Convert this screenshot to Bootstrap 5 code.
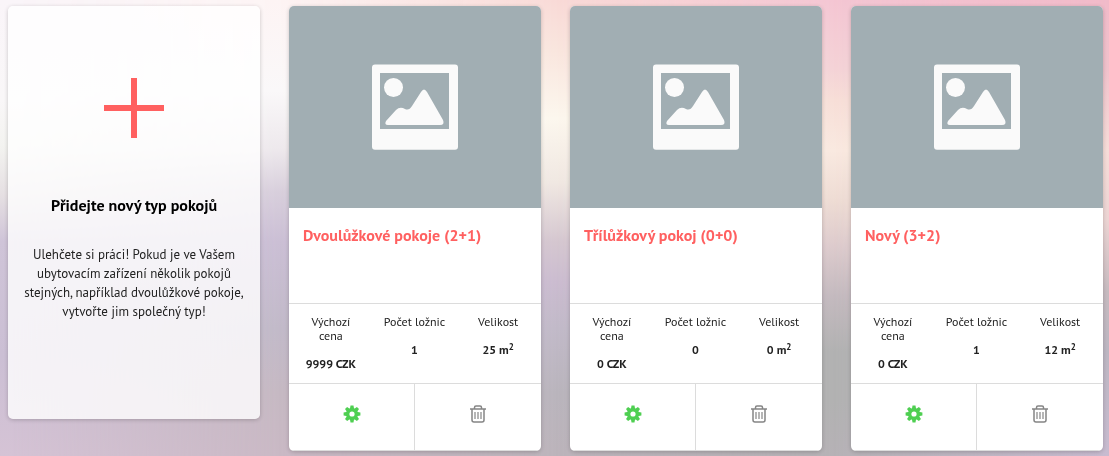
<!DOCTYPE html>
<html lang="cs">
<head>
<meta charset="utf-8">
<meta name="viewport" content="width=device-width, initial-scale=1">
<title>Typy pokojů</title>
<link href="https://cdn.jsdelivr.net/npm/bootstrap@5.3.0/dist/css/bootstrap.min.css" rel="stylesheet">
<style>
  body { font-family: "PT Sans", Lato, sans-serif; font-size: 13px; line-height: 19px; color: #222; background: #cfc4d6; }

  /* soft colour wash: each layer fades in from left to right */
  .wash, .wash div { position: fixed; inset: 0; }
  .wash { z-index: -1; }
  .wash-a { background: linear-gradient(#faf5f9 0%, #f9f7f8 22%, #f3f3f0 32%, #e5dfe2 43%, #cfc4d8 53%, #cbbfd4 78%, #d5c3d5 100%); }
  .wash-b { background: linear-gradient(#fdf4f4 0%, #faf8f9 20%, #ede8ec 33%, #d8cfdc 42%, #cbbfd5 53%, #c2bac9 72%, #c6b9c3 86%, #cab9c5 100%); mask-image: linear-gradient(90deg, transparent 1%, #000 25%); -webkit-mask-image: linear-gradient(90deg, transparent 1%, #000 25%); }
  .wash-c { background: linear-gradient(#f9dad7 0%, #f9e6de 11%, #fcf7ee 26%, #f0e8e2 40%, #d5c7d0 53%, #cbbcd0 62%, #c2bac9 72%, #bab5bd 86%, #bcb4bb 100%); mask-image: linear-gradient(90deg, transparent 25%, #000 50%); -webkit-mask-image: linear-gradient(90deg, transparent 25%, #000 50%); }
  .wash-d { background: linear-gradient(#f4c6d3 0%, #f4d3d7 15%, #f7dfd8 22%, #f9e9e0 33%, #eedcd4 44%, #ddcbcd 54%, #c4babf 65%, #b2b2b2 77%, #b2b2b2 88%, #b6b2b6 100%); mask-image: linear-gradient(90deg, transparent 50%, #000 75%); -webkit-mask-image: linear-gradient(90deg, transparent 50%, #000 75%); }
  .wash-e { background: linear-gradient(#f1bac9 0%, #f1c1cb 15%, #f6dcd8 33%, #ecd4d3 48%, #c6babf 64%, #bcb6c2 77%, #c8bbd0 100%); mask-image: linear-gradient(90deg, transparent 75%, #000 100%); -webkit-mask-image: linear-gradient(90deg, transparent 75%, #000 100%); }

  .room-grid { grid-template-columns: repeat(4, minmax(0, 1fr)); gap: 29px; padding: 6px 6px 5px 8px; }
  @media (max-width: 991px) { .room-grid { grid-template-columns: repeat(auto-fill, minmax(240px, 1fr)); } }

  .room-box { --line: #dcdcdc; border-radius: 5px; overflow: hidden; background: #fff; box-shadow: 0 1px 4px rgba(0, 0, 0, .2); }
  .room-add { background: rgba(255, 255, 255, .8); color: #222; margin-bottom: 32px; padding: 72px 15px 98px; }
  .room-add h2 { color: #000; margin: 57px 0 29px; }
  .room-box h2 { font-size: 16px; line-height: 21px; font-weight: 700; }
  .room-photo { background: #a1aeb3; height: 202px; }
  .room-name { padding: 17px 14px; height: 95px; }
  .room-name h2 a { color: #ff6060; }
  .room-facts { border-top: 1px solid var(--line); padding: 11px 1px 12px 0; font-size: 12px; line-height: 14px; }
  .room-facts dt { font-weight: 400; margin-bottom: 14px; padding: 0 10px; }
  .room-facts dd { font-weight: 700; }
  .room-facts sup { font-size: 9px; line-height: 0; }
  .room-tools { border-top: 1px solid var(--line); border-bottom: 1px solid var(--line); height: 68px; }
  .room-tools .btn { padding: 0 0 8px; border: 0; border-radius: 0; line-height: 18px; }
  .room-tools .btn:first-child { border-right: 1px solid var(--line); }
</style>
</head>
<body>
<svg class="d-none" xmlns="http://www.w3.org/2000/svg">
  <symbol id="photo" viewBox="0 0 86 86">
    <path fill="#fafafa" fill-rule="evenodd" d="M3 .4H83Q86 .4 86 3.400V82.700Q86 85.700 83 85.700H3Q0 85.700 0 82.700V3.400Q0 .4 3 .4ZM8 9V65H77V9Z"/>
    <circle cx="21.500" cy="23.500" r="9.500" fill="#fafafa"/>
    <path fill="#fafafa" d="M14 57 24 46Q28 42 33 45Q37 47 40 42L49 28Q52 23 55 28L71 56Q73 61 68 61H16Q12 61 14 57Z"/>
  </symbol>
  <symbol id="gear" viewBox="-9 -9 18 18">
    <g fill="#4fcf52">
      <path id="cog" d="M-2.200-4.500-1.500-8.400H1.500L2.200-4.500V4.500L1.500 8.400H-1.500L-2.200 4.500Z"/>
      <use href="#cog" transform="rotate(45)"/><use href="#cog" transform="rotate(90)"/><use href="#cog" transform="rotate(135)"/>
      <circle r="6"/>
    </g>
    <circle r="2.600" fill="#fff"/>
  </symbol>
  <symbol id="bin" viewBox="0 0 16 18">
    <g fill="none" stroke="#858585">
      <path stroke-width="1.500" d="M0 4H16M4.500 4V2.500Q4.500 1 6 1H10Q11.500 1 11.500 2.500V4M2 4V15Q2 17 4 17H12Q14 17 14 15V4"/>
      <path stroke-width="1.200" d="M5 7V14M8 7V14M11 7V14"/>
    </g>
  </symbol>
</svg>

<div class="wash" aria-hidden="true"><div class="wash-a"></div><div class="wash-b"></div><div class="wash-c"></div><div class="wash-d"></div><div class="wash-e"></div></div>

<main class="room-grid d-grid align-items-start">
  <a href="#" class="room-box room-add d-block text-center text-decoration-none">
    <svg class="d-block mx-auto" width="60" height="60" viewBox="0 0 60 60" aria-hidden="true"><path fill="#ff6060" d="M27 0H33V27H60V33H33V60H27V33H0V27H27Z"/></svg>
    <h2>Přidejte nový typ pokojů</h2>
    <p class="mb-0">Ulehčete si práci! Pokud je ve Vašem ubytovacím zařízení několik pokojů stejných, například dvoulůžkové pokoje, vytvořte jim společný typ!</p>
  </a>

  <article class="room-box">
    <div class="room-photo d-flex align-items-center justify-content-center"><svg width="86" height="86" aria-hidden="true"><use href="#photo"/></svg></div>
    <div class="room-name"><h2 class="m-0"><a href="#" class="text-decoration-none">Dvoulůžkové pokoje (2+1)</a></h2></div>
    <div class="room-facts row g-0 text-center">
      <dl class="col-4 m-0"><dt>Výchozí cena</dt><dd class="m-0">9999 CZK</dd></dl>
      <dl class="col-4 m-0"><dt>Počet ložnic</dt><dd class="m-0">1</dd></dl>
      <dl class="col-4 m-0"><dt>Velikost</dt><dd class="m-0">25 m<sup>2</sup></dd></dl>
    </div>
    <div class="room-tools d-flex">
      <button type="button" class="btn w-50" aria-label="Nastavení"><svg width="18" height="18"><use href="#gear"/></svg></button>
      <button type="button" class="btn w-50" aria-label="Smazat"><svg width="16" height="18"><use href="#bin"/></svg></button>
    </div>
  </article>

  <article class="room-box">
    <div class="room-photo d-flex align-items-center justify-content-center"><svg width="86" height="86" aria-hidden="true"><use href="#photo"/></svg></div>
    <div class="room-name"><h2 class="m-0"><a href="#" class="text-decoration-none">Třílůžkový pokoj (0+0)</a></h2></div>
    <div class="room-facts row g-0 text-center">
      <dl class="col-4 m-0"><dt>Výchozí cena</dt><dd class="m-0">0 CZK</dd></dl>
      <dl class="col-4 m-0"><dt>Počet ložnic</dt><dd class="m-0">0</dd></dl>
      <dl class="col-4 m-0"><dt>Velikost</dt><dd class="m-0">0 m<sup>2</sup></dd></dl>
    </div>
    <div class="room-tools d-flex">
      <button type="button" class="btn w-50" aria-label="Nastavení"><svg width="18" height="18"><use href="#gear"/></svg></button>
      <button type="button" class="btn w-50" aria-label="Smazat"><svg width="16" height="18"><use href="#bin"/></svg></button>
    </div>
  </article>

  <article class="room-box">
    <div class="room-photo d-flex align-items-center justify-content-center"><svg width="86" height="86" aria-hidden="true"><use href="#photo"/></svg></div>
    <div class="room-name"><h2 class="m-0"><a href="#" class="text-decoration-none">Nový (3+2)</a></h2></div>
    <div class="room-facts row g-0 text-center">
      <dl class="col-4 m-0"><dt>Výchozí cena</dt><dd class="m-0">0 CZK</dd></dl>
      <dl class="col-4 m-0"><dt>Počet ložnic</dt><dd class="m-0">1</dd></dl>
      <dl class="col-4 m-0"><dt>Velikost</dt><dd class="m-0">12 m<sup>2</sup></dd></dl>
    </div>
    <div class="room-tools d-flex">
      <button type="button" class="btn w-50" aria-label="Nastavení"><svg width="18" height="18"><use href="#gear"/></svg></button>
      <button type="button" class="btn w-50" aria-label="Smazat"><svg width="16" height="18"><use href="#bin"/></svg></button>
    </div>
  </article>
</main>
<script src="https://cdn.jsdelivr.net/npm/bootstrap@5.3.0/dist/js/bootstrap.bundle.min.js"></script>
</body>
</html>
